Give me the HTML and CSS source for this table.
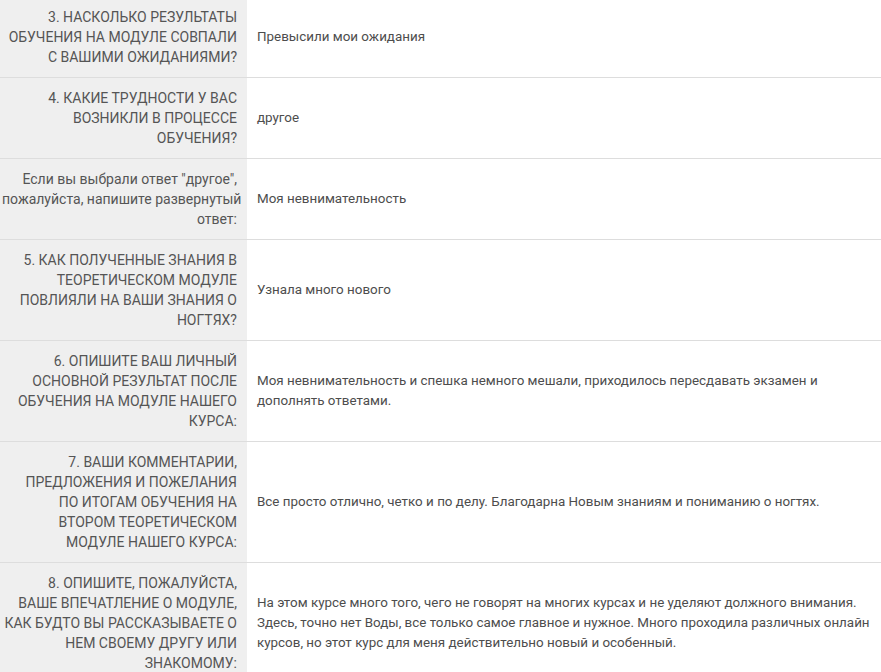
FILE: index.html
```html
<!DOCTYPE html>
<html lang="ru">
<head>
<meta charset="utf-8">
<title>Ответы анкеты</title>
<link rel="stylesheet" href="styles.css">
</head>
<body>
<div class="sheet">
  <div class="row">
    <div class="q">3. НАСКОЛЬКО РЕЗУЛЬТАТЫ<br>ОБУЧЕНИЯ НА МОДУЛЕ СОВПАЛИ<br>С ВАШИМИ ОЖИДАНИЯМИ?</div>
    <div class="a">Превысили мои ожидания</div>
  </div>
  <div class="row">
    <div class="q">4. КАКИЕ ТРУДНОСТИ У ВАС<br>ВОЗНИКЛИ В ПРОЦЕССЕ<br>ОБУЧЕНИЯ?</div>
    <div class="a">другое</div>
  </div>
  <div class="row">
    <div class="q">Если вы выбрали ответ "другое",<br>пожалуйста, напишите развернутый<br>ответ:</div>
    <div class="a">Моя невнимательность</div>
  </div>
  <div class="row">
    <div class="q">5. КАК ПОЛУЧЕННЫЕ ЗНАНИЯ В<br>ТЕОРЕТИЧЕСКОМ МОДУЛЕ<br>ПОВЛИЯЛИ НА ВАШИ ЗНАНИЯ О<br>НОГТЯХ?</div>
    <div class="a">Узнала много нового</div>
  </div>
  <div class="row">
    <div class="q">6. ОПИШИТЕ ВАШ ЛИЧНЫЙ<br>ОСНОВНОЙ РЕЗУЛЬТАТ ПОСЛЕ<br>ОБУЧЕНИЯ НА МОДУЛЕ НАШЕГО<br>КУРСА:</div>
    <div class="a">Моя невнимательность и спешка немного мешали, приходилось пересдавать экзамен и<br>дополнять ответами.</div>
  </div>
  <div class="row">
    <div class="q">7. ВАШИ КОММЕНТАРИИ,<br>ПРЕДЛОЖЕНИЯ И ПОЖЕЛАНИЯ<br>ПО ИТОГАМ ОБУЧЕНИЯ НА<br>ВТОРОМ ТЕОРЕТИЧЕСКОМ<br>МОДУЛЕ НАШЕГО КУРСА:</div>
    <div class="a">Все просто отлично, четко и по делу. Благодарна Новым знаниям и пониманию о ногтях.</div>
  </div>
  <div class="row">
    <div class="q">8. ОПИШИТЕ, ПОЖАЛУЙСТА,<br>ВАШЕ ВПЕЧАТЛЕНИЕ О МОДУЛЕ,<br>КАК БУДТО ВЫ РАССКАЗЫВАЕТЕ О<br>НЕМ СВОЕМУ ДРУГУ ИЛИ<br>ЗНАКОМОМУ:</div>
    <div class="a">На этом курсе много того, чего не говорят на многих курсах и не уделяют должного внимания.<br>Здесь, точно нет Воды, все только самое главное и нужное. Много проходила различных онлайн<br>курсов, но этот курс для меня действительно новый и особенный.</div>
  </div>
</div>
</body>
</html>
```
FILE: styles.css
```css
html, body {
  margin: 0;
  padding: 0;
  background: #fff;
}
body {
  font-family: Roboto, "Liberation Sans", sans-serif;
  color: #4a4a4a;
  overflow: hidden;
}
.sheet {
  margin-top: -3px;
  display: flex;
  flex-direction: column;
}
.row {
  display: grid;
  grid-template-columns: 247px 1fr;
  border-bottom: 1px solid #dddddd;
}
.q {
  background: #efefef;
  text-align: right;
  padding: 10px 10px 10px 2px;
  font-size: 14px;
  line-height: 20px;
  color: #555;
  white-space: nowrap;
}
.a {
  display: flex;
  align-items: center;
  padding: 10px 10px;
  font-size: 13.4px;
  line-height: 20px;
  color: #4d4d4d;
  white-space: nowrap;
}
```
